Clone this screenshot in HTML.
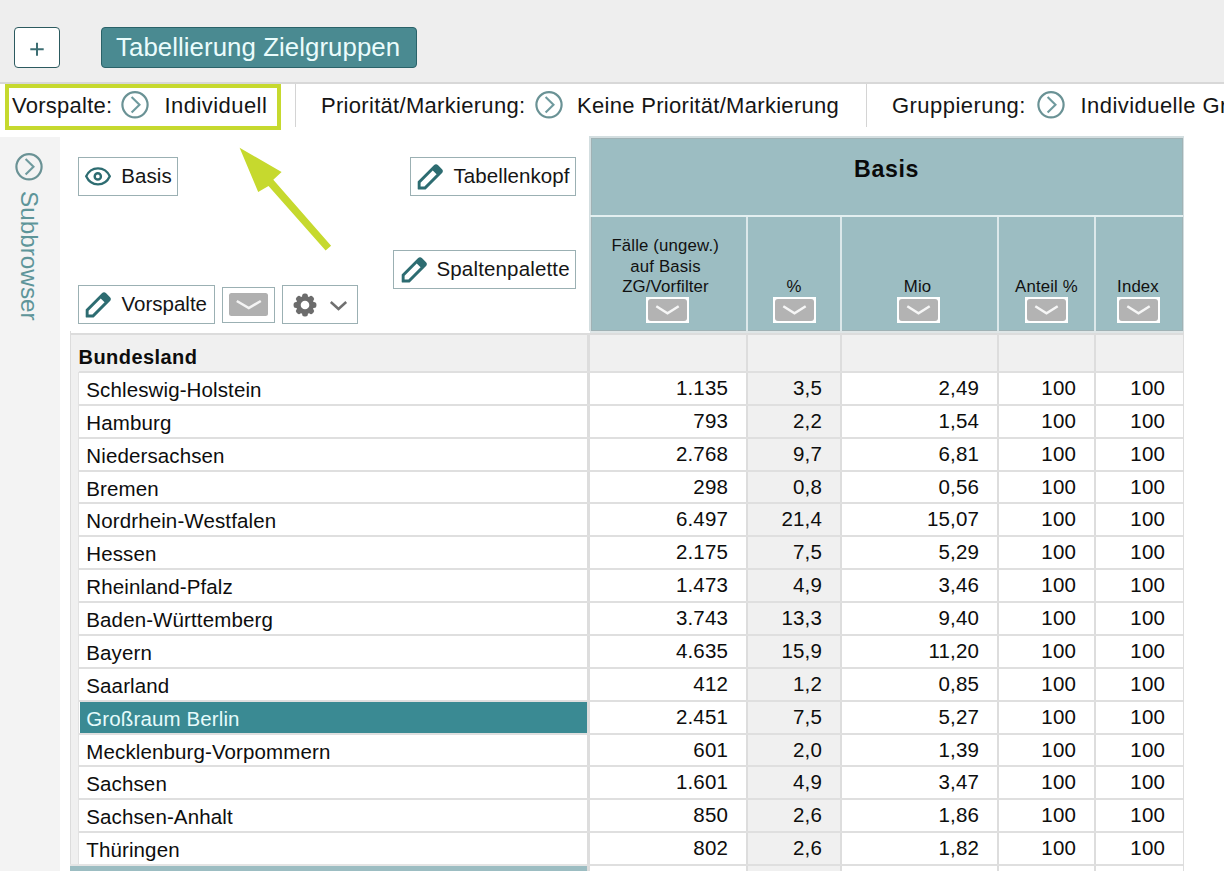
<!DOCTYPE html>
<html><head><meta charset="utf-8"><style>
*{margin:0;padding:0;box-sizing:border-box}
html,body{width:1224px;height:872px;overflow:hidden;background:#fff;font-family:"Liberation Sans",sans-serif;color:#111;position:relative}
.a{position:absolute}
.t{position:absolute;white-space:nowrap;line-height:1}
.btn{position:absolute;border:1.8px solid #9bb0b3;background:#fff}
.fb{position:absolute;width:43px;height:26px;background:#fff} .fb:before{content:"";position:absolute;left:2px;top:2px;right:2px;bottom:2px;background:#b3b3b3;border-radius:3px}
.rl{position:absolute;left:79px;width:1104px;height:2px;background:#dfdfdf}
</style></head><body>
<!-- top bar -->
<div class="a" style="left:0;top:0;width:1224px;height:82px;background:#eeeeee"></div>
<div class="a" style="left:0;top:82px;width:1224px;height:2px;background:#d8d8d8"></div>
<div class="a" style="left:14px;top:27px;width:46.2px;height:41px;border:1.8px solid #2c5a5f;border-radius:4px;background:#fff"></div>
<svg class="a" style="left:29px;top:41px" width="16" height="16" viewBox="0 0 16 16"><path d="M8 1.7 V14.7 M1.3 8.3 H14.7" stroke="#3c6e73" stroke-width="2"/></svg>
<div class="a" style="left:101px;top:27px;width:316px;height:41px;border:1.5px solid #2a6269;border-radius:4px;background:#4a8a91"></div>
<div class="t" style="left:116px;top:34.76px;font-size:25.8px;color:#eafcfc;letter-spacing:0.07px;">Tabellierung Zielgruppen</div>

<!-- filter bar -->
<div class="a" style="left:5px;top:84px;width:276px;height:46px;border:4px solid #c6d92e"></div>
<div class="a" style="left:295px;top:84px;width:1px;height:43px;background:#d4d4d4"></div>
<div class="a" style="left:866px;top:84px;width:1px;height:43px;background:#d4d4d4"></div>
<div class="t" style="left:12px;top:95.38px;font-size:22px;color:#151515;letter-spacing:0.25px;">Vorspalte:</div><svg class="a" style="left:121px;top:90.8px" width="28" height="28" viewBox="0 0 28 28"><circle cx="14" cy="13.8" r="12.6" fill="none" stroke="#6a9295" stroke-width="2.2"/><path d="M10.6 5.9 L18.5 13.7 L10.6 21.5" fill="none" stroke="#6f9a9e" stroke-width="2.1"/></svg><div class="t" style="left:164.5px;top:95.38px;font-size:22px;color:#151515;letter-spacing:0.45px;">Individuell</div><div class="t" style="left:321px;top:95.38px;font-size:22px;color:#151515;letter-spacing:0.3px;">Priorität/Markierung:</div><svg class="a" style="left:535px;top:90.8px" width="28" height="28" viewBox="0 0 28 28"><circle cx="14" cy="13.8" r="12.6" fill="none" stroke="#6a9295" stroke-width="2.2"/><path d="M10.6 5.9 L18.5 13.7 L10.6 21.5" fill="none" stroke="#6f9a9e" stroke-width="2.1"/></svg><div class="t" style="left:577px;top:95.38px;font-size:22px;color:#151515;letter-spacing:0.3px;">Keine Priorität/Markierung</div><div class="t" style="left:892px;top:95.38px;font-size:22px;color:#151515;letter-spacing:0.45px;">Gruppierung:</div><svg class="a" style="left:1037px;top:90.8px" width="28" height="28" viewBox="0 0 28 28"><circle cx="14" cy="13.8" r="12.6" fill="none" stroke="#6a9295" stroke-width="2.2"/><path d="M10.6 5.9 L18.5 13.7 L10.6 21.5" fill="none" stroke="#6f9a9e" stroke-width="2.1"/></svg><div class="t" style="left:1080.5px;top:95.38px;font-size:22px;color:#151515;letter-spacing:0.45px;">Individuelle Gruppierung</div>

<!-- sidebar -->
<div class="a" style="left:0;top:137px;width:60px;height:735px;background:#f3f3f3"></div>
<svg class="a" style="left:15px;top:153px" width="28" height="28" viewBox="0 0 28 28"><circle cx="14" cy="13.8" r="12.6" fill="none" stroke="#6a9295" stroke-width="2.2"/><path d="M10.6 5.9 L18.5 13.7 L10.6 21.5" fill="none" stroke="#6f9a9e" stroke-width="2.1"/></svg>
<div class="t" style="left:41px;top:191.2px;font-size:24.3px;color:#5e9599;transform-origin:0 0;transform:rotate(90deg)">Subbrowser</div>

<!-- arrow -->
<svg class="a" style="left:0;top:0" width="400" height="300" viewBox="0 0 400 300"><polygon points="239.6,147.7 281.6,172.1 273.3,179.7 331.1,245.7 325.6,250.5 268.5,185.9 258.2,192.1" fill="#c6d92e"/></svg>

<!-- buttons -->
<div class="btn" style="left:78px;top:157px;width:100px;height:39px"></div>
<svg class="a" style="left:84px;top:164px" width="28" height="25" viewBox="0 0 28 25"><path d="M2.2,12.3 C7,1.6 21,1.6 25.8,12.3 C21,23 7,23 2.2,12.3 Z" fill="none" stroke="#2d6c71" stroke-width="2.3" stroke-linejoin="miter"/><circle cx="13.8" cy="12.4" r="3.1" fill="none" stroke="#2d6c71" stroke-width="2.4"/></svg>
<div class="t" style="left:121.2px;top:166.15px;font-size:20.5px;color:#151515;letter-spacing:0.1px;">Basis</div>

<div class="btn" style="left:410px;top:157px;width:166px;height:39px"></div>
<svg class="a" style="left:415px;top:162px" width="30" height="30" viewBox="0 0 30 30"><g transform="translate(2.7,27.4) rotate(-45)"><path fill-rule="evenodd" fill="#2d6c71" d="M0.3,-0.3 L5.6,-5.6 L28.5,-5.6 Q31.5,-5.6 31.5,-2.6 L31.5,2.6 Q31.5,5.6 28.5,5.6 L5.6,5.6 L0.3,0.3 Q0,0 0.3,-0.3 Z M4.1,0 L6.8,-2.7 L24,-2.7 L24,2.7 L6.8,2.7 Z"/></g></svg>
<div class="t" style="left:453.5px;top:165.75px;font-size:20.5px;color:#151515;letter-spacing:0.08px;">Tabellenkopf</div>

<div class="btn" style="left:393px;top:250px;width:183px;height:39px"></div>
<svg class="a" style="left:398.5px;top:255px" width="30" height="30" viewBox="0 0 30 30"><g transform="translate(2.7,27.4) rotate(-45)"><path fill-rule="evenodd" fill="#2d6c71" d="M0.3,-0.3 L5.6,-5.6 L28.5,-5.6 Q31.5,-5.6 31.5,-2.6 L31.5,2.6 Q31.5,5.6 28.5,5.6 L5.6,5.6 L0.3,0.3 Q0,0 0.3,-0.3 Z M4.1,0 L6.8,-2.7 L24,-2.7 L24,2.7 L6.8,2.7 Z"/></g></svg>
<div class="t" style="left:436.5px;top:258.55px;font-size:20.5px;color:#151515;letter-spacing:0.15px;">Spaltenpalette</div>

<div class="btn" style="left:78px;top:285px;width:137px;height:39px"></div>
<svg class="a" style="left:83px;top:289.5px" width="30" height="30" viewBox="0 0 30 30"><g transform="translate(2.7,27.4) rotate(-45)"><path fill-rule="evenodd" fill="#2d6c71" d="M0.3,-0.3 L5.6,-5.6 L28.5,-5.6 Q31.5,-5.6 31.5,-2.6 L31.5,2.6 Q31.5,5.6 28.5,5.6 L5.6,5.6 L0.3,0.3 Q0,0 0.3,-0.3 Z M4.1,0 L6.8,-2.7 L24,-2.7 L24,2.7 L6.8,2.7 Z"/></g></svg>
<div class="t" style="left:121.5px;top:294.45px;font-size:20.5px;color:#151515;letter-spacing:0px;">Vorspalte</div>

<div class="btn" style="left:222px;top:287px;width:53px;height:36px"></div>
<div class="a" style="left:228.5px;top:293px;width:39.5px;height:23px;background:#b0b0b0;border-radius:2.5px"></div>
<svg class="a" style="left:228.5px;top:293px" width="40" height="23" viewBox="0 0 40 23"><path d="M7.8 8 L19.8 15 L31.8 8" fill="none" stroke="#f4f4f4" stroke-width="2.6"/></svg>

<div class="btn" style="left:282px;top:285px;width:76px;height:39px"></div>
<div class="a" style="left:282px;top:285px;width:76px;height:39px"><svg class="a" style="left:11px;top:7.7px" width="24" height="24" viewBox="0 0 24 24"><g fill="#6c6c6c"><circle cx="12" cy="12" r="9.1"/><rect x="9.1" y="0.6" width="5.8" height="6.5" rx="2.5" transform="rotate(0 12 12)"/><rect x="9.1" y="0.6" width="5.8" height="6.5" rx="2.5" transform="rotate(45 12 12)"/><rect x="9.1" y="0.6" width="5.8" height="6.5" rx="2.5" transform="rotate(90 12 12)"/><rect x="9.1" y="0.6" width="5.8" height="6.5" rx="2.5" transform="rotate(135 12 12)"/><rect x="9.1" y="0.6" width="5.8" height="6.5" rx="2.5" transform="rotate(180 12 12)"/><rect x="9.1" y="0.6" width="5.8" height="6.5" rx="2.5" transform="rotate(225 12 12)"/><rect x="9.1" y="0.6" width="5.8" height="6.5" rx="2.5" transform="rotate(270 12 12)"/><rect x="9.1" y="0.6" width="5.8" height="6.5" rx="2.5" transform="rotate(315 12 12)"/></g><circle cx="12" cy="12" r="4.3" fill="#fff"/></svg>
<svg class="a" style="left:47px;top:15px" width="19" height="12" viewBox="0 0 19 12"><path d="M1.8 2 L9.5 9 L17.2 2" fill="none" stroke="#707070" stroke-width="2.5"/></svg></div>

<!-- table header -->
<div class="a" style="left:589px;top:136px;width:595px;height:197px;background:#d3dee0"></div>
<div class="a" style="left:590.5px;top:137.8px;width:592px;height:193px;background:#9cbdc2;border:1.5px solid #a0b2b5"></div>
<div class="t" style="left:736.5px;width:300px;text-align:center;top:157.76px;font-size:23.2px;color:#0a0a0a;letter-spacing:0.6px;font-weight:bold;">Basis</div>
<div class="a" style="left:590px;top:215px;width:593px;height:2px;background:#e3eff0"></div>
<div class="a" style="left:746px;top:217px;width:2px;height:114px;background:#dce8ea"></div>
<div class="a" style="left:840px;top:217px;width:2px;height:114px;background:#dce8ea"></div>
<div class="a" style="left:997px;top:217px;width:2px;height:114px;background:#dce8ea"></div>
<div class="a" style="left:1094px;top:217px;width:2px;height:114px;background:#dce8ea"></div>
<div class="t" style="left:515.2px;width:300px;text-align:center;top:237.78px;font-size:16.8px;color:#111;letter-spacing:0.15px;">Fälle (ungew.)</div>
<div class="t" style="left:515.5px;width:300px;text-align:center;top:259.08px;font-size:16.8px;color:#111;letter-spacing:0.15px;">auf Basis</div>
<div class="t" style="left:515.5px;width:300px;text-align:center;top:279.38px;font-size:16.8px;color:#111;letter-spacing:0.15px;">ZG/Vorfilter</div>
<div class="t" style="left:644px;width:300px;text-align:center;top:279.38px;font-size:16.8px;color:#111;letter-spacing:0.15px;">%</div>
<div class="t" style="left:767.5px;width:300px;text-align:center;top:279.28px;font-size:16.8px;color:#111;letter-spacing:0.15px;">Mio</div>
<div class="t" style="left:896.5px;width:300px;text-align:center;top:279.38px;font-size:16.8px;color:#111;letter-spacing:0.15px;">Anteil %</div>
<div class="t" style="left:988px;width:300px;text-align:center;top:279.38px;font-size:16.8px;color:#111;letter-spacing:0.15px;">Index</div>
<div class="fb" style="left:646.0px;top:297px"><svg class="a" style="left:0;top:0" width="43" height="26" viewBox="0 0 43 26"><path d="M10.3 9.3 L21.5 16.3 L32.7 9.3" fill="none" stroke="#f6f6f6" stroke-width="2.5"/></svg></div>
<div class="fb" style="left:772.5px;top:297px"><svg class="a" style="left:0;top:0" width="43" height="26" viewBox="0 0 43 26"><path d="M10.3 9.3 L21.5 16.3 L32.7 9.3" fill="none" stroke="#f6f6f6" stroke-width="2.5"/></svg></div>
<div class="fb" style="left:897.0px;top:297px"><svg class="a" style="left:0;top:0" width="43" height="26" viewBox="0 0 43 26"><path d="M10.3 9.3 L21.5 16.3 L32.7 9.3" fill="none" stroke="#f6f6f6" stroke-width="2.5"/></svg></div>
<div class="fb" style="left:1025.0px;top:297px"><svg class="a" style="left:0;top:0" width="43" height="26" viewBox="0 0 43 26"><path d="M10.3 9.3 L21.5 16.3 L32.7 9.3" fill="none" stroke="#f6f6f6" stroke-width="2.5"/></svg></div>
<div class="fb" style="left:1117.0px;top:297px"><svg class="a" style="left:0;top:0" width="43" height="26" viewBox="0 0 43 26"><path d="M10.3 9.3 L21.5 16.3 L32.7 9.3" fill="none" stroke="#f6f6f6" stroke-width="2.5"/></svg></div>

<!-- table body -->
<div class="a" style="left:70px;top:331px;width:1113px;height:541px;background:#f0f0f0"></div>
<div class="a" style="left:70px;top:331px;width:520px;height:2px;background:#fff"></div><div class="a" style="left:590px;top:331px;width:594px;height:2px;background:#dfe6e7"></div><div class="a" style="left:70px;top:333px;width:1114px;height:2px;background:#dcdcdc"></div>
<div class="a" style="left:70px;top:331px;width:1px;height:541px;background:#dcdcdc"></div>
<div class="a" style="left:78px;top:372px;width:1px;height:494px;background:#e2e2e2"></div>
<div class="a" style="left:587px;top:334px;width:3px;height:538px;background:#dddddd"></div>
<div class="a" style="left:746px;top:334px;width:2px;height:538px;background:#dddddd"></div>
<div class="a" style="left:840px;top:334px;width:2px;height:538px;background:#dddddd"></div>
<div class="a" style="left:997px;top:334px;width:2px;height:538px;background:#dddddd"></div>
<div class="a" style="left:1094px;top:334px;width:2px;height:538px;background:#dddddd"></div>
<div class="a" style="left:1183px;top:331px;width:1px;height:541px;background:#dddddd"></div>
<div class="t" style="left:78.5px;top:347.07px;font-size:20px;color:#0d0d0d;letter-spacing:0.45px;font-weight:bold;">Bundesland</div>
<div class="a" style="left:79px;top:373px;width:508px;height:493px;background:#fff"></div>
<div class="a" style="left:590px;top:373px;width:156px;height:499px;background:#fff"></div>
<div class="a" style="left:842px;top:373px;width:155px;height:499px;background:#fff"></div>
<div class="a" style="left:999px;top:373px;width:95px;height:499px;background:#fff"></div>
<div class="a" style="left:1096px;top:373px;width:87px;height:499px;background:#fff"></div>
<div class="rl" style="top:371px"></div><div class="t" style="left:86.3px;top:379.65px;font-size:20.5px;color:#0d0d0d;letter-spacing:0.12px;">Schleswig-Holstein</div><div class="t" style="right:496px;top:377.85px;font-size:20.5px;color:#0d0d0d;letter-spacing:0.15px;">1.135</div><div class="t" style="right:402px;top:377.85px;font-size:20.5px;color:#0d0d0d;letter-spacing:0.15px;">3,5</div><div class="t" style="right:245px;top:377.85px;font-size:20.5px;color:#0d0d0d;letter-spacing:0.15px;">2,49</div><div class="t" style="right:148px;top:377.85px;font-size:20.5px;color:#0d0d0d;letter-spacing:0.15px;">100</div><div class="t" style="right:59px;top:377.85px;font-size:20.5px;color:#0d0d0d;letter-spacing:0.15px;">100</div><div class="rl" style="top:404px"></div><div class="t" style="left:86.3px;top:412.65px;font-size:20.5px;color:#0d0d0d;letter-spacing:0.12px;">Hamburg</div><div class="t" style="right:496px;top:410.85px;font-size:20.5px;color:#0d0d0d;letter-spacing:0.15px;">793</div><div class="t" style="right:402px;top:410.85px;font-size:20.5px;color:#0d0d0d;letter-spacing:0.15px;">2,2</div><div class="t" style="right:245px;top:410.85px;font-size:20.5px;color:#0d0d0d;letter-spacing:0.15px;">1,54</div><div class="t" style="right:148px;top:410.85px;font-size:20.5px;color:#0d0d0d;letter-spacing:0.15px;">100</div><div class="t" style="right:59px;top:410.85px;font-size:20.5px;color:#0d0d0d;letter-spacing:0.15px;">100</div><div class="rl" style="top:437px"></div><div class="t" style="left:86.3px;top:445.65px;font-size:20.5px;color:#0d0d0d;letter-spacing:0.12px;">Niedersachsen</div><div class="t" style="right:496px;top:443.85px;font-size:20.5px;color:#0d0d0d;letter-spacing:0.15px;">2.768</div><div class="t" style="right:402px;top:443.85px;font-size:20.5px;color:#0d0d0d;letter-spacing:0.15px;">9,7</div><div class="t" style="right:245px;top:443.85px;font-size:20.5px;color:#0d0d0d;letter-spacing:0.15px;">6,81</div><div class="t" style="right:148px;top:443.85px;font-size:20.5px;color:#0d0d0d;letter-spacing:0.15px;">100</div><div class="t" style="right:59px;top:443.85px;font-size:20.5px;color:#0d0d0d;letter-spacing:0.15px;">100</div><div class="rl" style="top:470px"></div><div class="t" style="left:86.3px;top:478.65px;font-size:20.5px;color:#0d0d0d;letter-spacing:0.12px;">Bremen</div><div class="t" style="right:496px;top:476.85px;font-size:20.5px;color:#0d0d0d;letter-spacing:0.15px;">298</div><div class="t" style="right:402px;top:476.85px;font-size:20.5px;color:#0d0d0d;letter-spacing:0.15px;">0,8</div><div class="t" style="right:245px;top:476.85px;font-size:20.5px;color:#0d0d0d;letter-spacing:0.15px;">0,56</div><div class="t" style="right:148px;top:476.85px;font-size:20.5px;color:#0d0d0d;letter-spacing:0.15px;">100</div><div class="t" style="right:59px;top:476.85px;font-size:20.5px;color:#0d0d0d;letter-spacing:0.15px;">100</div><div class="rl" style="top:502px"></div><div class="t" style="left:86.3px;top:510.65px;font-size:20.5px;color:#0d0d0d;letter-spacing:0.12px;">Nordrhein-Westfalen</div><div class="t" style="right:496px;top:508.85px;font-size:20.5px;color:#0d0d0d;letter-spacing:0.15px;">6.497</div><div class="t" style="right:402px;top:508.85px;font-size:20.5px;color:#0d0d0d;letter-spacing:0.15px;">21,4</div><div class="t" style="right:245px;top:508.85px;font-size:20.5px;color:#0d0d0d;letter-spacing:0.15px;">15,07</div><div class="t" style="right:148px;top:508.85px;font-size:20.5px;color:#0d0d0d;letter-spacing:0.15px;">100</div><div class="t" style="right:59px;top:508.85px;font-size:20.5px;color:#0d0d0d;letter-spacing:0.15px;">100</div><div class="rl" style="top:535px"></div><div class="t" style="left:86.3px;top:543.65px;font-size:20.5px;color:#0d0d0d;letter-spacing:0.12px;">Hessen</div><div class="t" style="right:496px;top:541.85px;font-size:20.5px;color:#0d0d0d;letter-spacing:0.15px;">2.175</div><div class="t" style="right:402px;top:541.85px;font-size:20.5px;color:#0d0d0d;letter-spacing:0.15px;">7,5</div><div class="t" style="right:245px;top:541.85px;font-size:20.5px;color:#0d0d0d;letter-spacing:0.15px;">5,29</div><div class="t" style="right:148px;top:541.85px;font-size:20.5px;color:#0d0d0d;letter-spacing:0.15px;">100</div><div class="t" style="right:59px;top:541.85px;font-size:20.5px;color:#0d0d0d;letter-spacing:0.15px;">100</div><div class="rl" style="top:568px"></div><div class="t" style="left:86.3px;top:576.65px;font-size:20.5px;color:#0d0d0d;letter-spacing:0.12px;">Rheinland-Pfalz</div><div class="t" style="right:496px;top:574.85px;font-size:20.5px;color:#0d0d0d;letter-spacing:0.15px;">1.473</div><div class="t" style="right:402px;top:574.85px;font-size:20.5px;color:#0d0d0d;letter-spacing:0.15px;">4,9</div><div class="t" style="right:245px;top:574.85px;font-size:20.5px;color:#0d0d0d;letter-spacing:0.15px;">3,46</div><div class="t" style="right:148px;top:574.85px;font-size:20.5px;color:#0d0d0d;letter-spacing:0.15px;">100</div><div class="t" style="right:59px;top:574.85px;font-size:20.5px;color:#0d0d0d;letter-spacing:0.15px;">100</div><div class="rl" style="top:601px"></div><div class="t" style="left:86.3px;top:609.65px;font-size:20.5px;color:#0d0d0d;letter-spacing:0.12px;">Baden-Württemberg</div><div class="t" style="right:496px;top:607.85px;font-size:20.5px;color:#0d0d0d;letter-spacing:0.15px;">3.743</div><div class="t" style="right:402px;top:607.85px;font-size:20.5px;color:#0d0d0d;letter-spacing:0.15px;">13,3</div><div class="t" style="right:245px;top:607.85px;font-size:20.5px;color:#0d0d0d;letter-spacing:0.15px;">9,40</div><div class="t" style="right:148px;top:607.85px;font-size:20.5px;color:#0d0d0d;letter-spacing:0.15px;">100</div><div class="t" style="right:59px;top:607.85px;font-size:20.5px;color:#0d0d0d;letter-spacing:0.15px;">100</div><div class="rl" style="top:634px"></div><div class="t" style="left:86.3px;top:642.65px;font-size:20.5px;color:#0d0d0d;letter-spacing:0.12px;">Bayern</div><div class="t" style="right:496px;top:640.85px;font-size:20.5px;color:#0d0d0d;letter-spacing:0.15px;">4.635</div><div class="t" style="right:402px;top:640.85px;font-size:20.5px;color:#0d0d0d;letter-spacing:0.15px;">15,9</div><div class="t" style="right:245px;top:640.85px;font-size:20.5px;color:#0d0d0d;letter-spacing:0.15px;">11,20</div><div class="t" style="right:148px;top:640.85px;font-size:20.5px;color:#0d0d0d;letter-spacing:0.15px;">100</div><div class="t" style="right:59px;top:640.85px;font-size:20.5px;color:#0d0d0d;letter-spacing:0.15px;">100</div><div class="rl" style="top:667px"></div><div class="t" style="left:86.3px;top:675.65px;font-size:20.5px;color:#0d0d0d;letter-spacing:0.12px;">Saarland</div><div class="t" style="right:496px;top:673.85px;font-size:20.5px;color:#0d0d0d;letter-spacing:0.15px;">412</div><div class="t" style="right:402px;top:673.85px;font-size:20.5px;color:#0d0d0d;letter-spacing:0.15px;">1,2</div><div class="t" style="right:245px;top:673.85px;font-size:20.5px;color:#0d0d0d;letter-spacing:0.15px;">0,85</div><div class="t" style="right:148px;top:673.85px;font-size:20.5px;color:#0d0d0d;letter-spacing:0.15px;">100</div><div class="t" style="right:59px;top:673.85px;font-size:20.5px;color:#0d0d0d;letter-spacing:0.15px;">100</div><div class="rl" style="top:700px"></div><div class="a" style="left:80px;top:702px;width:507px;height:31px;background:#3a8a93"></div><div class="t" style="left:86.3px;top:708.65px;font-size:20.5px;color:#e6fbfb;letter-spacing:0.12px;">Großraum Berlin</div><div class="t" style="right:496px;top:706.85px;font-size:20.5px;color:#0d0d0d;letter-spacing:0.15px;">2.451</div><div class="t" style="right:402px;top:706.85px;font-size:20.5px;color:#0d0d0d;letter-spacing:0.15px;">7,5</div><div class="t" style="right:245px;top:706.85px;font-size:20.5px;color:#0d0d0d;letter-spacing:0.15px;">5,27</div><div class="t" style="right:148px;top:706.85px;font-size:20.5px;color:#0d0d0d;letter-spacing:0.15px;">100</div><div class="t" style="right:59px;top:706.85px;font-size:20.5px;color:#0d0d0d;letter-spacing:0.15px;">100</div><div class="rl" style="top:733px"></div><div class="t" style="left:86.3px;top:741.65px;font-size:20.5px;color:#0d0d0d;letter-spacing:0.12px;">Mecklenburg-Vorpommern</div><div class="t" style="right:496px;top:739.85px;font-size:20.5px;color:#0d0d0d;letter-spacing:0.15px;">601</div><div class="t" style="right:402px;top:739.85px;font-size:20.5px;color:#0d0d0d;letter-spacing:0.15px;">2,0</div><div class="t" style="right:245px;top:739.85px;font-size:20.5px;color:#0d0d0d;letter-spacing:0.15px;">1,39</div><div class="t" style="right:148px;top:739.85px;font-size:20.5px;color:#0d0d0d;letter-spacing:0.15px;">100</div><div class="t" style="right:59px;top:739.85px;font-size:20.5px;color:#0d0d0d;letter-spacing:0.15px;">100</div><div class="rl" style="top:765px"></div><div class="t" style="left:86.3px;top:773.65px;font-size:20.5px;color:#0d0d0d;letter-spacing:0.12px;">Sachsen</div><div class="t" style="right:496px;top:771.85px;font-size:20.5px;color:#0d0d0d;letter-spacing:0.15px;">1.601</div><div class="t" style="right:402px;top:771.85px;font-size:20.5px;color:#0d0d0d;letter-spacing:0.15px;">4,9</div><div class="t" style="right:245px;top:771.85px;font-size:20.5px;color:#0d0d0d;letter-spacing:0.15px;">3,47</div><div class="t" style="right:148px;top:771.85px;font-size:20.5px;color:#0d0d0d;letter-spacing:0.15px;">100</div><div class="t" style="right:59px;top:771.85px;font-size:20.5px;color:#0d0d0d;letter-spacing:0.15px;">100</div><div class="rl" style="top:798px"></div><div class="t" style="left:86.3px;top:806.65px;font-size:20.5px;color:#0d0d0d;letter-spacing:0.12px;">Sachsen-Anhalt</div><div class="t" style="right:496px;top:804.85px;font-size:20.5px;color:#0d0d0d;letter-spacing:0.15px;">850</div><div class="t" style="right:402px;top:804.85px;font-size:20.5px;color:#0d0d0d;letter-spacing:0.15px;">2,6</div><div class="t" style="right:245px;top:804.85px;font-size:20.5px;color:#0d0d0d;letter-spacing:0.15px;">1,86</div><div class="t" style="right:148px;top:804.85px;font-size:20.5px;color:#0d0d0d;letter-spacing:0.15px;">100</div><div class="t" style="right:59px;top:804.85px;font-size:20.5px;color:#0d0d0d;letter-spacing:0.15px;">100</div><div class="rl" style="top:831px"></div><div class="t" style="left:86.3px;top:839.65px;font-size:20.5px;color:#0d0d0d;letter-spacing:0.12px;">Thüringen</div><div class="t" style="right:496px;top:837.85px;font-size:20.5px;color:#0d0d0d;letter-spacing:0.15px;">802</div><div class="t" style="right:402px;top:837.85px;font-size:20.5px;color:#0d0d0d;letter-spacing:0.15px;">2,6</div><div class="t" style="right:245px;top:837.85px;font-size:20.5px;color:#0d0d0d;letter-spacing:0.15px;">1,82</div><div class="t" style="right:148px;top:837.85px;font-size:20.5px;color:#0d0d0d;letter-spacing:0.15px;">100</div><div class="t" style="right:59px;top:837.85px;font-size:20.5px;color:#0d0d0d;letter-spacing:0.15px;">100</div>
<div class="rl" style="top:864px"></div><div class="a" style="left:70px;top:864px;width:517px;height:2px;background:#e4e4e4"></div>
<div class="a" style="left:70px;top:866px;width:517px;height:4.5px;background:#9cbdc2"></div>
<div class="a" style="left:0;top:870.6px;width:1224px;height:2px;background:#fff"></div>
</body></html>
